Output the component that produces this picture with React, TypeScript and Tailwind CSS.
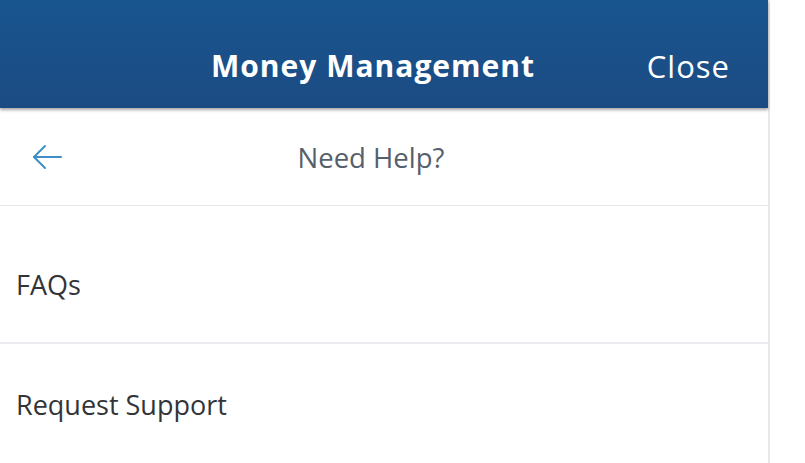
import React from "react";

const rows = [
    { label: "FAQs", height: "h-[138px]", pad: "pt-[65px]" },
    { label: "Request Support", height: "h-[119px]", pad: "pt-[47px]" },
];

function BackArrow() {
    return (
        <svg width="32" height="26" viewBox="0 0 32 26" fill="none" stroke="#3f8fc6" strokeWidth="2" strokeLinecap="round" strokeLinejoin="round">
            <path d="M2 13 H29" />
            <path d="M13 2 L2 13 L13 24" />
        </svg>
    );
}

export default function App() {
    return (
        <div className="w-[805px] h-[463px] overflow-hidden bg-white flex flex-row font-['Open_Sans',sans-serif]">
            <div className="w-[770px] flex flex-col border-r-2 border-[#e7e7ec]">
                <div className="relative z-10 h-[108px] shrink-0 bg-gradient-to-b from-[#18558f] to-[#1c4b83] shadow-[0_2px_3px_rgba(0,0,0,0.35)] flex flex-row items-center pt-[24px]">
                    <div className="w-[211px]" />
                    <div className="text-white font-bold text-[30px] tracking-[1px] leading-none">Money Management</div>
                    <div className="flex-grow" />
                    <div className="text-white font-medium text-[31px] tracking-[1px] leading-none mr-[38px]">Close</div>
                </div>
                <div className="relative h-[98px] shrink-0 flex items-center justify-center border-b border-[#e6e6eb]">
                    <div className="absolute left-[32px] top-[36px]">
                        <BackArrow />
                    </div>
                    <span className="text-[#56606c] text-[27.5px] leading-none mr-[26px] mt-[2px]">Need Help?</span>
                </div>
                {rows.map((r, i) => (
                    <div key={r.label} className={`${r.height} shrink-0 ${r.pad} pl-[16px] ${i === 0 ? "border-b-2 border-[#ebebf0]" : ""}`}>
                        <span className="text-[#333438] text-[27px] leading-none">{r.label}</span>
                    </div>
                ))}
            </div>
            <div className="flex-grow bg-white" />
        </div>
    );
}
